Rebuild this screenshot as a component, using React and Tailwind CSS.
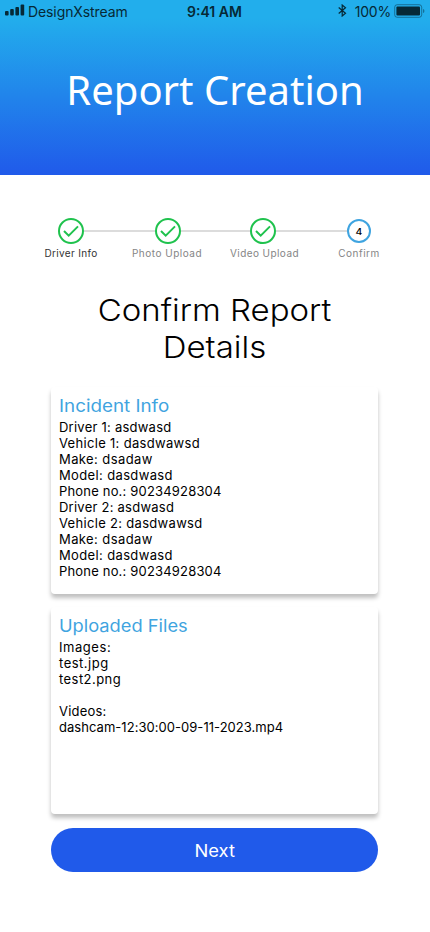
const incident = [
  ['Driver 1: asdwasd', 'tracking-[0.24px]'],
  ['Vehicle 1: dasdwawsd', 'tracking-[0.31px]'],
  ['Make: dsadaw', 'tracking-[0.41px]'],
  ['Model: dasdwasd', 'tracking-[0.36px]'],
  ['Phone no.: 90234928304', 'tracking-[0.18px]'],
  ['Driver 2: asdwasd', 'tracking-[0.24px]'],
  ['Vehicle 2: dasdwawsd', 'tracking-[0.31px]'],
  ['Make: dsadaw', 'tracking-[0.41px]'],
  ['Model: dasdwasd', 'tracking-[0.36px]'],
  ['Phone no.: 90234928304', 'tracking-[0.18px]'],
];

const files = [
  ['Images:', 'tracking-[0.55px]'],
  ['test.jpg', 'tracking-[0.5px]'],
  ['test2.png', 'tracking-[0.45px]'],
  ['\u00a0', ''],
  ['Videos:', 'tracking-[0.2px]'],
  ['dashcam-12:30:00-09-11-2023.mp4', 'tracking-[0.04px]'],
];

const steps = [
  { label: 'Driver Info', done: true, tone: 'text-[#333] tracking-[0.35px]' },
  { label: 'Photo Upload', done: true, tone: 'text-[#858585] tracking-[0.5px] pr-[2px]' },
  { label: 'Video Upload', done: true, tone: 'text-[#858585] tracking-[0.42px] pl-[3px]' },
  { label: 'Confirm', done: false, tone: 'text-[#858585] tracking-[0.5px]' },
];

function StatusBar() {
  return (
    <div className="grid h-6 grid-cols-3 items-center px-[5px] text-[14px] leading-6 text-[#062936]">
      <div className="flex items-center gap-1">
        <svg width="20" height="12" viewBox="0 0 20 12" fill="currentColor" className="-mt-[5px]">
          <rect x="0" y="7" width="3.600" height="4.500" rx="1" />
          <rect x="5.200" y="5" width="3.600" height="6.500" rx="1" />
          <rect x="10.400" y="3" width="3.600" height="8.500" rx="1" />
          <rect x="15.600" y="0.500" width="3.600" height="11" rx="1" />
        </svg>
        <span className="-ml-px tracking-[-0.1px]">DesignXstream</span>
      </div>
      <div className="-ml-px text-center font-semibold">9:41 AM</div>
      <div className="flex items-center justify-end">
        <svg width="9" height="13" viewBox="0 0 9 13" fill="none" stroke="currentColor" strokeWidth="1.2" className="mr-2 -mt-1">
          <path d="M0.7 3.500 7.500 9.300 4.200 12V1l3.300 2.700-6.800 5.800" />
        </svg>
        <span className="mr-[3px] tracking-[-0.2px]">100%</span>
        <svg width="31" height="14" viewBox="0 0 31 14" className="-mt-[2px] shrink-0">
          <rect x="0.700" y="0.700" width="27" height="12.600" rx="2.500" fill="none" stroke="#062936" strokeOpacity="0.45" />
          <rect x="2.400" y="2.600" width="23.600" height="8.800" rx="1" fill="#062936" />
          <path d="M29 5v4c1-.4 1.400-1.100 1.400-2S30 5.400 29 5z" fill="#062936" fillOpacity="0.45" />
        </svg>
      </div>
    </div>
  );
}

function Stepper() {
  return (
    <div className="ml-[23px] mt-[43px] grid w-[386px] grid-cols-[96px_98px_92px_100px]">
      {steps.map((s, i) => (
        <div key={s.label} className="flex flex-col items-center">
          <div className="flex h-[26px] w-full items-center">
            <div className={'h-[2px] flex-1 ' + (i > 0 ? 'bg-[#dcdcdc]' : '')} />
            {s.done ? (
              <svg width="26" height="26" viewBox="0 0 26 26" fill="none" stroke="#1fc24d" strokeWidth="2">
                <circle cx="13" cy="13" r="12" />
                <path d="m6 13 4.700 4.700 9.300-9.300" />
              </svg>
            ) : (
              <div className="flex size-6 items-center justify-center rounded-full border-2 border-[#3fa4e0] text-[9px] font-medium leading-none text-black">
                <span className="scale-x-115">4</span>
              </div>
            )}
            <div className={'h-[2px] flex-1 ' + (i < 3 ? 'bg-[#dcdcdc]' : '')} />
          </div>
          <div className={'mt-[3px] whitespace-nowrap text-[10px] leading-[13px] ' + s.tone}>{s.label}</div>
        </div>
      ))}
    </div>
  );
}

function Card({ title, titleScale, lines }) {
  return (
    <section className="h-[207px] rounded-[4px] bg-white px-2 pt-2 shadow-[0_4px_4px_rgba(0,0,0,0.25)]">
      <h2 className={'origin-left text-[17px] leading-[22px] text-[#3fa4e0] ' + titleScale}>{title}</h2>
      <div className="mt-[2px] text-[13px] leading-4 text-black">
        {lines.map(([text, tracking], i) => (
          <p key={i} className={'whitespace-nowrap ' + tracking}>{text}</p>
        ))}
      </div>
    </section>
  );
}

export default function App() {
  return (
    <div className="h-[932px] w-[430px] overflow-hidden bg-white font-['Inter',sans-serif]">
      <header className="h-[175px] bg-linear-to-b/srgb from-[#22aeec] from-10% to-[#205aea]">
        <StatusBar />
        <h1 className="mt-[39px] text-center font-['Noto_Sans',sans-serif] text-[40px] leading-[54px] text-white">Report Creation</h1>
      </header>
      <Stepper />
      <h1 className="mr-px mt-[32px] scale-x-110 text-center text-[30px] font-light leading-[37px] text-black">
        Confirm Report
        <br />
        Details
      </h1>
      <main className="ml-[51px] mt-[21px] flex w-[327px] flex-col">
        <div className="flex flex-col gap-[13px]">
          <Card title="Incident Info" titleScale="scale-x-[1.105]" lines={incident} />
          <Card title="Uploaded Files" titleScale="scale-x-[1.075]" lines={files} />
        </div>
        <button className="mt-[14px] h-11 rounded-full bg-[#205aea] pt-px text-[17px] leading-[22px] text-white">
          <span className="inline-block scale-x-108">Next</span>
        </button>
      </main>
    </div>
  );
}
